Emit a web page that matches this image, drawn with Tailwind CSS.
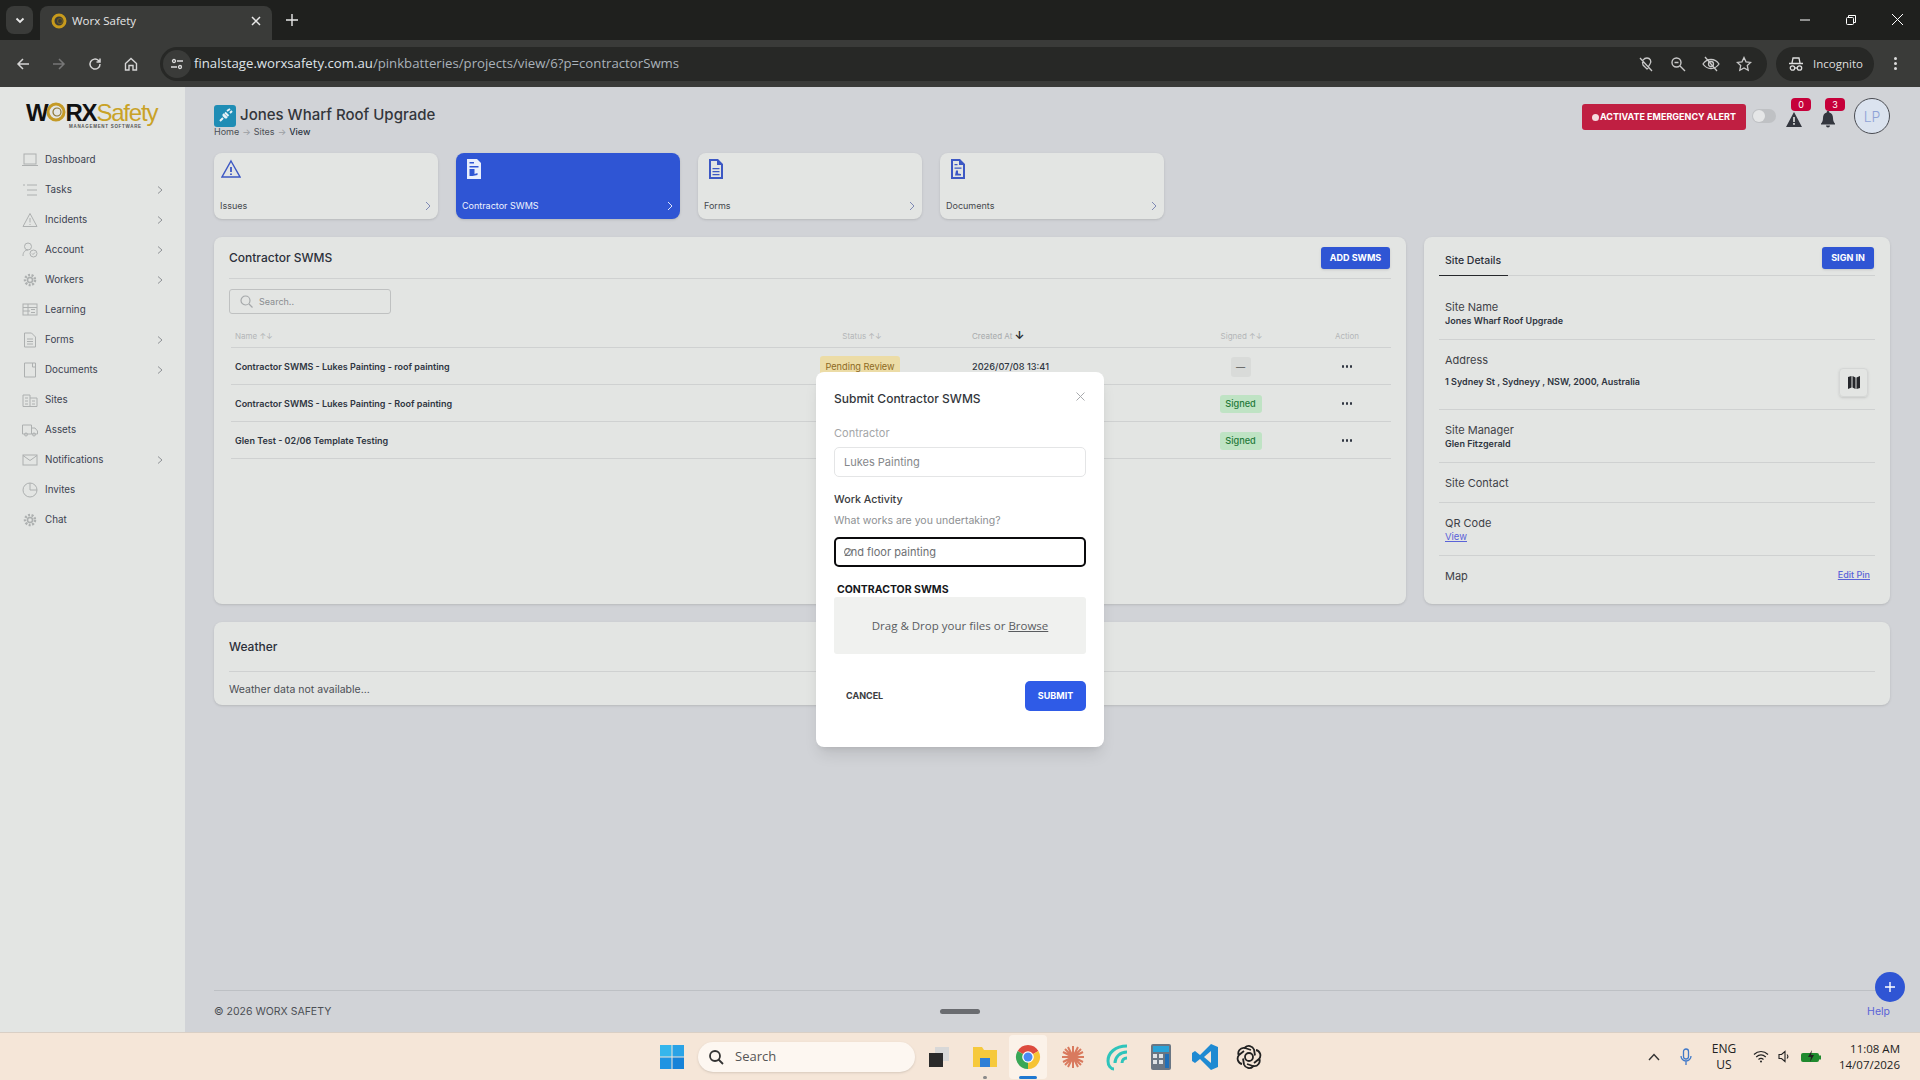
<!DOCTYPE html>
<html lang="en">
<head>
    <meta charset="UTF-8">
    <title>Worx Safety</title>
    <script src="https://cdn.jsdelivr.net/npm/@tailwindcss/browser@4"></script>
</head>
<body class="w-[1920px] h-[1080px] overflow-hidden bg-[#d1d3d7] font-['Inter','Liberation_Sans',sans-serif]">
<div class="relative flex flex-col h-[1080px]">

    <!-- Browser tabs -->
    <div class="flex items-end h-[40px] bg-[#1f201e] text-white shrink-0">
        <div class="ml-[6px] mb-[6px] w-[27px] h-[28px] rounded-lg bg-[#3a3b39] flex items-center justify-center">
            <svg width="12" height="12" viewBox="0 0 12 12" fill="none" stroke="#e8e8e8" stroke-width="1.8"><path d="M2.5 4.5 6 8l3.5-3.5"/></svg>
        </div>
        <div class="ml-[7px] w-[232px] h-[34px] rounded-t-lg bg-[#3a3b39] flex items-center pl-[11px] pr-[10px] pb-[5px]">
            <svg width="16" height="18" viewBox="0 0 16 18" fill="none"><circle cx="8" cy="9" r="6" stroke="#c79a1c" stroke-width="3"/><circle cx="9" cy="9" r="2.5" stroke="#6b5a22" stroke-width="1.2"/></svg>
            <span class="ml-[5px] text-[11.5px] text-[#e6e6e6] font-['Open_Sans',sans-serif] flex-1">Worx Safety</span>
            <svg width="12" height="12" viewBox="0 0 12 12" stroke="#e8e8e8" stroke-width="1.5"><path d="M2 2l8 8M10 2l-8 8"/></svg>
        </div>
        <svg class="ml-[14px] mb-[14px]" width="12" height="12" viewBox="0 0 12 12" stroke="#e8e8e8" stroke-width="1.4"><path d="M6 0v12M0 6h12"/></svg>
        <div class="ml-auto flex items-center mb-[15px] pr-[17px] gap-[36px]">
            <svg width="10" height="10" viewBox="0 0 10 10" stroke="#fff" stroke-width="1"><path d="M0 5h10"/></svg>
            <svg width="10" height="10" viewBox="0 0 10 10" fill="none" stroke="#fff" stroke-width="1"><rect x="0.5" y="2.5" width="7" height="7" rx="1"/><path d="M2.5 2.5V.5h7v7h-2"/></svg>
            <svg width="11" height="11" viewBox="0 0 11 11" stroke="#fff" stroke-width="1"><path d="M0 0l11 11M11 0L0 11"/></svg>
        </div>
    </div>

    <!-- Browser toolbar -->
    <div class="flex items-center h-[47px] bg-[#3a3b39] shrink-0">
        <div class="flex items-center w-[160px] pl-[16px] gap-[22px]">
            <svg width="14" height="14" viewBox="0 0 14 14" fill="none" stroke="#d5d5d5" stroke-width="1.5"><path d="M13 7H2M7 2 2 7l5 5"/></svg>
            <svg width="14" height="14" viewBox="0 0 14 14" fill="none" stroke="#777" stroke-width="1.5"><path d="M1 7h11M7 2l5 5-5 5"/></svg>
            <svg width="14" height="14" viewBox="0 0 14 14" fill="none" stroke="#d5d5d5" stroke-width="1.5"><path d="M12 7a5 5 0 1 1-1.5-3.5L12 5M12 1.5V5H8.5"/></svg>
            <svg width="14" height="14" viewBox="0 0 14 14" fill="none" stroke="#d5d5d5" stroke-width="1.4"><path d="M1.5 6.5 7 1.5l5.500 5V13H9V8.500H5V13H1.500z"/></svg>
        </div>
        <div class="flex items-center w-[1607px] h-[34px] rounded-full bg-[#272826]">
            <div class="w-[28px] h-[28px] ml-[3px] rounded-full bg-[#3a3b39] flex items-center justify-center">
                <svg width="14" height="14" viewBox="0 0 14 14" fill="none" stroke="#ddd" stroke-width="1.300"><circle cx="4" cy="4" r="1.500"/><path d="M7 4h6M1 10h6"/><circle cx="10" cy="10" r="1.500"/></svg>
            </div>
            <span class="ml-[3px] text-[13.2px] font-['Open_Sans',sans-serif] text-[#dfe3e8]">finalstage.worxsafety.com.au<span class="text-[#aab2ba]">/pinkbatteries/projects/view/6?p=contractorSwms</span></span>
            <div class="ml-auto flex items-center gap-[16px] pr-[15px]">
                <svg width="16" height="16" viewBox="0 0 16 16" fill="none" stroke="#c8c8c8" stroke-width="1.300"><path d="M5 9C3 5 6 2 9 2s5 3 3 6l-3 5-4-4zM2 2l12 13"/></svg>
                <svg width="16" height="16" viewBox="0 0 16 16" fill="none" stroke="#c8c8c8" stroke-width="1.400"><circle cx="6.500" cy="6.500" r="4.500"/><path d="M10 10l5 5M4.500 6.500h4"/></svg>
                <svg width="18" height="16" viewBox="0 0 18 16" fill="none" stroke="#c8c8c8" stroke-width="1.300"><path d="M1 8c4-6 12-6 16 0-4 6-12 6-16 0zM3 1l12 14"/><circle cx="9" cy="8" r="2.500"/></svg>
                <svg width="16" height="16" viewBox="0 0 16 16" fill="none" stroke="#c8c8c8" stroke-width="1.300"><path d="M8 1.500l2 4.300 4.700.6-3.400 3.200.9 4.700L8 12l-4.200 2.300.9-4.700L1.300 6.400 6 5.800z"/></svg>
            </div>
        </div>
        <div class="ml-[9px] flex items-center w-[98px] h-[34px] rounded-full bg-[#272826] pl-[12px] gap-[9px]">
            <svg width="16" height="16" viewBox="0 0 16 16" fill="none" stroke="#ddd" stroke-width="1.300"><path d="M1 7.500h14M4 7l1-5h6l1 5"/><circle cx="4.500" cy="12" r="2.200"/><circle cx="11.500" cy="12" r="2.200"/><path d="M6.700 12h2.600"/></svg>
            <span class="text-[11.5px] text-[#dedede] font-['Open_Sans',sans-serif]">Incognito</span>
        </div>
        <div class="ml-[20px] flex flex-col gap-[2px]">
            <span class="w-[3px] h-[3px] rounded-full bg-[#ddd]"></span><span class="w-[3px] h-[3px] rounded-full bg-[#ddd]"></span><span class="w-[3px] h-[3px] rounded-full bg-[#ddd]"></span>
        </div>
    </div>

    <!-- App -->
    <div class="flex flex-1 min-h-0">
        <!-- Sidebar -->
        <aside class="w-[185px] shrink-0 bg-[#e3e5e3]">
            <div class="h-[58px] pl-[26px] pt-[13px]">
                <div class="flex items-baseline leading-[26px] h-[24px] text-[24px] tracking-[-1.2px]">
                    <span class="font-['Liberation_Sans',sans-serif] font-bold text-[#111]">W</span>
                    <svg class="self-center mx-[-1px]" width="20" height="22" viewBox="0 0 20 22" fill="none"><circle cx="10" cy="11" r="8" stroke="#c49a26" stroke-width="3"/><circle cx="11" cy="11" r="4" stroke="#8a7432" stroke-width="1.200"/></svg>
                    <span class="font-['Liberation_Sans',sans-serif] font-bold text-[#111]">RX</span>
                    <span class="font-['Liberation_Sans',sans-serif] text-[#c9a227]">Safety</span>
                </div>
                <div class="ml-[43px] text-[4.500px] leading-[5px] tracking-[0.7px] font-bold text-[#555] font-['Liberation_Sans',sans-serif]">MANAGEMENT SOFTWARE</div>
            </div>
            <nav class="text-[9.8px] text-[#3c4250]">
                <a class="flex items-center h-[30px] pl-[22px] pr-[22px]"><svg class="w-[16px] h-[16px] mr-[7px]" viewBox="0 0 16 16" fill="none" stroke="#adb0b0" stroke-width="1"><rect x="2" y="2" width="12" height="10"/><path d="M0 13.500h16"/></svg>Dashboard</a>
                <a class="flex items-center h-[30px] pl-[22px] pr-[22px]"><svg class="w-[16px] h-[16px] mr-[7px]" viewBox="0 0 16 16" fill="none" stroke="#adb0b0" stroke-width="1"><path d="M1 3h2M5 3h10M5 8h10M5 13h10"/></svg>Tasks<svg class="ml-auto" width="6" height="8" viewBox="0 0 6 8" fill="none" stroke="#8f9296"><path d="M1 .5 5 4 1 7.500"/></svg></a>
                <a class="flex items-center h-[30px] pl-[22px] pr-[22px]"><svg class="w-[16px] h-[16px] mr-[7px]" viewBox="0 0 16 16" fill="none" stroke="#adb0b0" stroke-width="1"><path d="M8 1.500 15 14.500H1zM8 6v4.500M8 12v1"/></svg>Incidents<svg class="ml-auto" width="6" height="8" viewBox="0 0 6 8" fill="none" stroke="#8f9296"><path d="M1 .5 5 4 1 7.500"/></svg></a>
                <a class="flex items-center h-[30px] pl-[22px] pr-[22px]"><svg class="w-[16px] h-[16px] mr-[7px]" viewBox="0 0 16 16" fill="none" stroke="#adb0b0" stroke-width="1"><circle cx="6" cy="4.500" r="3.500"/><path d="M1 14c0-4 2-6 5-6"/><circle cx="11.500" cy="11.500" r="3.500"/><path d="M10 11.500l1 1 2-2"/></svg>Account<svg class="ml-auto" width="6" height="8" viewBox="0 0 6 8" fill="none" stroke="#8f9296"><path d="M1 .5 5 4 1 7.500"/></svg></a>
                <a class="flex items-center h-[30px] pl-[22px] pr-[22px]"><svg class="w-[16px] h-[16px] mr-[7px]" viewBox="0 0 16 16" fill="none" stroke="#adb0b0" stroke-width="1.500"><circle cx="8" cy="8" r="2.500"/><circle cx="8" cy="8" r="5" stroke-dasharray="2 1.500" stroke-width="2.500"/></svg>Workers<svg class="ml-auto" width="6" height="8" viewBox="0 0 6 8" fill="none" stroke="#8f9296"><path d="M1 .5 5 4 1 7.500"/></svg></a>
                <a class="flex items-center h-[30px] pl-[22px] pr-[22px]"><svg class="w-[16px] h-[16px] mr-[7px]" viewBox="0 0 16 16" fill="none" stroke="#adb0b0" stroke-width="1"><rect x="1" y="2" width="14" height="11"/><path d="M1 5.500h14M1 9h7M6 2v11M9 7.500h4M9 10.500h4"/></svg>Learning</a>
                <a class="flex items-center h-[30px] pl-[22px] pr-[22px]"><svg class="w-[16px] h-[16px] mr-[7px]" viewBox="0 0 16 16" fill="none" stroke="#adb0b0" stroke-width="1"><path d="M2.500 1h7l4 4v10h-11zM5 7h6M5 9.500h6M5 12h6"/></svg>Forms<svg class="ml-auto" width="6" height="8" viewBox="0 0 6 8" fill="none" stroke="#8f9296"><path d="M1 .5 5 4 1 7.500"/></svg></a>
                <a class="flex items-center h-[30px] pl-[22px] pr-[22px]"><svg class="w-[16px] h-[16px] mr-[7px]" viewBox="0 0 16 16" fill="none" stroke="#adb0b0" stroke-width="1"><path d="M2.500 1h11v14h-11zM10.500 1v4h3"/></svg>Documents<svg class="ml-auto" width="6" height="8" viewBox="0 0 6 8" fill="none" stroke="#8f9296"><path d="M1 .5 5 4 1 7.500"/></svg></a>
                <a class="flex items-center h-[30px] pl-[22px] pr-[22px]"><svg class="w-[16px] h-[16px] mr-[7px]" viewBox="0 0 16 16" fill="none" stroke="#adb0b0" stroke-width="1"><path d="M1 14.500V3h7v11.500M8 6h7v8.500H1M3 6h3M3 9h3M3 12h3M10 9h3M10 12h3"/></svg>Sites</a>
                <a class="flex items-center h-[30px] pl-[22px] pr-[22px]"><svg class="w-[16px] h-[16px] mr-[7px]" viewBox="0 0 16 16" fill="none" stroke="#adb0b0" stroke-width="1"><path d="M0.500 3h9v9h-9zM9.500 6h3.500l2.500 3v3h-6"/><circle cx="4" cy="12.500" r="1.500"/><circle cx="12" cy="12.500" r="1.500"/></svg>Assets</a>
                <a class="flex items-center h-[30px] pl-[22px] pr-[22px]"><svg class="w-[16px] h-[16px] mr-[7px]" viewBox="0 0 16 16" fill="none" stroke="#adb0b0" stroke-width="1"><rect x="1" y="3" width="14" height="10"/><path d="M1 3.500l7 5 7-5"/></svg>Notifications<svg class="ml-auto" width="6" height="8" viewBox="0 0 6 8" fill="none" stroke="#8f9296"><path d="M1 .5 5 4 1 7.500"/></svg></a>
                <a class="flex items-center h-[30px] pl-[22px] pr-[22px]"><svg class="w-[16px] h-[16px] mr-[7px]" viewBox="0 0 16 16" fill="none" stroke="#adb0b0" stroke-width="1"><circle cx="8" cy="8" r="7"/><path d="M8 1v7h7"/></svg>Invites</a>
                <a class="flex items-center h-[30px] pl-[22px] pr-[22px]"><svg class="w-[16px] h-[16px] mr-[7px]" viewBox="0 0 16 16" fill="none" stroke="#adb0b0" stroke-width="1.500"><circle cx="8" cy="8" r="2.500"/><circle cx="8" cy="8" r="5" stroke-dasharray="2 1.500" stroke-width="2.500"/></svg>Chat</a>
            </nav>
        </aside>

        <!-- Main -->
        <main class="flex-1 min-w-0 flex flex-col pl-[29px] pr-[30px]">
            <!-- Page header -->
            <div class="flex h-[66px] pt-[11px] shrink-0">
                <div>
                    <div class="flex items-center h-[23px] mt-[6px]">
                        <div class="w-[22px] h-[22px] rounded-[3px] bg-[#1f8db5] flex items-center justify-center">
                            <svg width="15" height="15" viewBox="0 0 15 15" fill="none" stroke="#e9f3f7" stroke-width="2"><path d="M2 13l3-3M5 7l3 3M7 4.500l3.500 3.500M9 3l3-2M12 5l2-2M5 6l4 4"/></svg>
                        </div>
                        <h1 class="ml-[4px] text-[15px] font-medium text-[#33363b]">Jones Wharf Roof Upgrade</h1>
                    </div>
                    <div class="flex items-center text-[9px] h-[12px] -mt-[1px] text-[#4c4f55]">
                        <span>Home</span><span class="mx-[3px] text-[#9a9da2]">→</span><span>Sites</span><span class="mx-[3px] text-[#9a9da2]">→</span><span class="font-medium text-[#2b3442]">View</span>
                    </div>
                </div>
                <div class="ml-auto flex items-start">
                    <button class="mt-[6px] w-[164px] h-[26px] rounded-[3px] bg-[#c01f42] text-white text-[9px] font-bold flex items-center justify-center">
                        <span class="w-[7px] h-[7px] rounded-full bg-[#f6dbe0] mr-[1px]"></span>ACTIVATE EMERGENCY ALERT
                    </button>
                    <div class="ml-[6px] mt-[11px] w-[24px] h-[14px] rounded-full bg-[#bfc1c4] relative"><span class="absolute left-[1px] top-[1px] w-[12px] h-[12px] rounded-full bg-[#e5e6e7]"></span></div>
                    <div class="relative ml-[10px] w-[20px] h-[36px]">
                        <span class="absolute left-[5px] top-0 w-[20px] h-[13px] rounded-[4px] bg-[#c6003a] text-white text-[9px] leading-[13px] text-center">0</span>
                        <svg class="absolute left-0 top-[14px]" width="16" height="15" viewBox="0 0 16 15"><path d="M8 0 16 15H0z" fill="#33363e"/><rect x="7.200" y="5" width="1.600" height="5" fill="#e3e5e3"/><rect x="7.200" y="11" width="1.600" height="1.800" fill="#e3e5e3"/></svg>
                    </div>
                    <div class="relative ml-[13px] w-[20px] h-[36px]">
                        <span class="absolute left-[6px] top-0 w-[20px] h-[13px] rounded-[4px] bg-[#c6003a] text-white text-[9px] leading-[13px] text-center">3</span>
                        <svg class="absolute left-[2px] top-[13px]" width="14" height="17" viewBox="0 0 14 17"><path d="M7 0a1.200 1.200 0 0 1 1.200 1.500C11 2.200 12 4.500 12 7c0 3 1 4.500 2 5.500v1H0v-1c1-1 2-2.500 2-5.500 0-2.500 1-4.800 3.800-5.500A1.200 1.200 0 0 1 7 0zM5 14.500h4a2 2 0 0 1-4 0z" fill="#33363e"/></svg>
                    </div>
                    <div class="ml-[15px] w-[36px] h-[36px] rounded-full bg-[#dbe3ef] border border-[#4a4c52] flex items-center justify-center text-[14px] font-light text-[#8ea2d6]">LP</div>
                </div>
            </div>

            <!-- Tab cards -->
            <div class="flex gap-[18px] shrink-0">
                <div class="w-[224px] h-[66px] rounded-lg bg-[#e3e5e3] shadow-sm relative pl-[7px] pt-[6px]">
                    <svg width="20" height="20" viewBox="0 0 20 20" fill="none" stroke="#3d58c4" stroke-width="1.400"><path d="M10 2 19 18H1z"/><path d="M10 8v5M10 14.500v1.500" stroke-width="1.800"/></svg>
                    <div class="absolute left-[6px] bottom-[8px] leading-[11px] text-[9px] text-[#45484d]">Issues</div>
                    <svg class="absolute right-[7px] bottom-[8px]" width="6" height="10" viewBox="0 0 6 10" fill="none" stroke="#7f89b5"><path d="M1 1l4 4-4 4"/></svg>
                </div>
                <div class="w-[224px] h-[66px] rounded-lg bg-[#2f55d4] shadow-sm relative px-[10px] pt-[6px]">
                    <svg width="16" height="20" viewBox="0 0 16 20" fill="#e9eefc"><path d="M1 0h10l4 4v16H1zM3.500 3v1.500H8V3zM3.500 7v1.500h9V7zM3.500 10v7h3l5-1v-2l-3 1v-5z"/></svg>
                    <div class="absolute left-[6px] bottom-[8px] leading-[11px] text-[9px] text-[#f0f3fd]">Contractor SWMS</div>
                    <svg class="absolute right-[7px] bottom-[8px]" width="6" height="10" viewBox="0 0 6 10" fill="none" stroke="#dfe6fb"><path d="M1 1l4 4-4 4"/></svg>
                </div>
                <div class="w-[224px] h-[66px] rounded-lg bg-[#e3e5e3] shadow-sm relative px-[10px] pt-[6px]">
                    <svg width="16" height="20" viewBox="0 0 16 20" fill="#3d58c4"><path d="M1 0h9l5 5v15H1zM3 2v16h10V6H9V2zM4.500 9h7v1.300h-7zM4.500 12h7v1.300h-7zM4.500 15h7v1.300h-7z" fill-rule="evenodd"/></svg>
                    <div class="absolute left-[6px] bottom-[8px] leading-[11px] text-[9px] text-[#45484d]">Forms</div>
                    <svg class="absolute right-[7px] bottom-[8px]" width="6" height="10" viewBox="0 0 6 10" fill="none" stroke="#7f89b5"><path d="M1 1l4 4-4 4"/></svg>
                </div>
                <div class="w-[224px] h-[66px] rounded-lg bg-[#e3e5e3] shadow-sm relative px-[10px] pt-[6px]">
                    <svg width="16" height="20" viewBox="0 0 16 20" fill="#3d58c4"><path d="M1 0h9l5 5v15H1zM3 2v16h10V6H9V2zM4.500 5h3v1.300h-3zM4.500 8.500h7v1.300h-7zM6 11.500h2v3l3 .5v1.500H5z" fill-rule="evenodd"/></svg>
                    <div class="absolute left-[6px] bottom-[8px] leading-[11px] text-[9px] text-[#45484d]">Documents</div>
                    <svg class="absolute right-[7px] bottom-[8px]" width="6" height="10" viewBox="0 0 6 10" fill="none" stroke="#7f89b5"><path d="M1 1l4 4-4 4"/></svg>
                </div>
            </div>

            <!-- Panels -->
            <div class="flex gap-[18px] mt-[18px] h-[367px] shrink-0">
                <!-- Contractor SWMS -->
                <section class="w-[1192px] rounded-lg bg-[#e3e5e3] shadow-sm px-[15px]">
                    <div class="flex items-center justify-between h-[42px] border-b border-[#cfd1d1]">
                        <h2 class="text-[12px] font-medium text-[#2b2f3a]">Contractor SWMS</h2>
                        <button class="w-[69px] h-[22px] mr-[1px] rounded-[3px] bg-[#2f55d4] text-white text-[9px] font-bold shadow-sm">ADD SWMS</button>
                    </div>
                    <div class="mt-[10px] w-[162px] h-[25px] border border-[#bfc1c1] rounded-[3px] flex items-center pl-[10px] text-[9px] text-[#8a8d90]">
                        <svg class="mr-[6px]" width="13" height="13" viewBox="0 0 13 13" fill="none" stroke="#a5a8aa" stroke-width="1.200"><circle cx="5.500" cy="5.500" r="4.500"/><path d="M9 9l3.500 3.500"/></svg>Search..
                    </div>
                    <div class="flex items-center h-[34px] pt-[10px] border-b border-[#cfd1d1] text-[8px] text-[#b3b6b8] ml-[2px]">
                        <div class="pl-[4px] w-[566px]">Name ↑↓</div>
                        <div class="w-[130px] text-center">Status ↑↓</div>
                        <div class="ml-[45px] w-[242px] text-[#a7aaac]">Created At <span class="text-[#26282c] font-bold text-[11px]">↓</span></div>
                        <div class="w-[55px] text-center">Signed ↑↓</div>
                        <div class="ml-[38px] w-[80px] text-center">Action</div>
                    </div>
                    <div class="flex items-center h-[37px] pt-[1px] border-b border-[#cfd1d1] text-[9.2px] ml-[2px]">
                        <div class="pl-[4px] w-[589px] text-[9px] font-semibold text-[#2f3541]">Contractor SWMS - Lukes Painting - roof painting</div>
                        <div class="w-[152px]"><span class="inline-block w-[80px] text-center py-[4px] rounded-[3px] bg-[#ecdca6] text-[#8c6a1f]">Pending Review</span></div>
                        <div class="w-[221px] text-[#2f3541] font-medium">2026/07/08 13:41</div>
                        <div class="w-[95px] flex justify-center"><span class="w-[20px] h-[20px] rounded-[3px] bg-[#d9dbd9] text-center leading-[20px] text-[#555]">—</span></div>
                        <div class="ml-[19px] w-[80px] flex justify-center gap-[1.5px]"><span class="w-[2.5px] h-[2.5px] rounded-full bg-[#2f3541]"></span><span class="w-[2.5px] h-[2.5px] rounded-full bg-[#2f3541]"></span><span class="w-[2.5px] h-[2.5px] rounded-full bg-[#2f3541]"></span></div>
                    </div>
                    <div class="flex items-center h-[37px] pt-[1px] border-b border-[#cfd1d1] text-[9.2px] ml-[2px]">
                        <div class="pl-[4px] w-[962px] text-[9px] font-semibold text-[#2f3541]">Contractor SWMS - Lukes Painting - Roof painting</div>
                        <div class="w-[95px] flex justify-center"><span class="w-[42px] h-[18px] rounded-[3px] bg-[#bfe3c4] text-center leading-[18px] text-[#1f7a3a] font-medium">Signed</span></div>
                        <div class="ml-[19px] w-[80px] flex justify-center gap-[1.5px]"><span class="w-[2.5px] h-[2.5px] rounded-full bg-[#2f3541]"></span><span class="w-[2.5px] h-[2.5px] rounded-full bg-[#2f3541]"></span><span class="w-[2.5px] h-[2.5px] rounded-full bg-[#2f3541]"></span></div>
                    </div>
                    <div class="flex items-center h-[37px] pt-[1px] border-b border-[#cfd1d1] text-[9.2px] ml-[2px]">
                        <div class="pl-[4px] w-[962px] text-[9px] font-semibold text-[#2f3541]">Glen Test - 02/06 Template Testing</div>
                        <div class="w-[95px] flex justify-center"><span class="w-[42px] h-[18px] rounded-[3px] bg-[#bfe3c4] text-center leading-[18px] text-[#1f7a3a] font-medium">Signed</span></div>
                        <div class="ml-[19px] w-[80px] flex justify-center gap-[1.5px]"><span class="w-[2.5px] h-[2.5px] rounded-full bg-[#2f3541]"></span><span class="w-[2.5px] h-[2.5px] rounded-full bg-[#2f3541]"></span><span class="w-[2.5px] h-[2.5px] rounded-full bg-[#2f3541]"></span></div>
                    </div>
                </section>

                <!-- Site details -->
                <section class="w-[466px] rounded-lg bg-[#e3e5e3] shadow-sm px-[15px] text-[#3e4147]">
                    <div class="flex justify-between h-[39px] border-b border-[#cfd1d1]">
                        <div class="w-[69px] h-[39px] border-b border-[#26282c] pl-[6px] pt-[17px] text-[10.5px] leading-[14px] font-medium text-[#2b2f3a]">Site Details</div>
                        <button class="mt-[10px] mr-[1px] w-[52px] h-[22px] rounded-[3px] bg-[#2f55d4] text-white text-[9px] font-bold shadow-sm">SIGN IN</button>
                    </div>
                    <div class="h-[64px] border-b border-[#cfd1d1] pl-[6px] pt-[24px]">
                        <div class="text-[11px] leading-[14px]">Site Name</div>
                        <div class="text-[9px] leading-[14px] font-semibold text-[#2f3541]">Jones Wharf Roof Upgrade</div>
                    </div>
                    <div class="relative h-[70px] border-b border-[#cfd1d1] pl-[6px] pt-[13px]">
                        <div class="text-[11px] leading-[14px]">Address</div>
                        <div class="mt-[8px] text-[9px] leading-[14px] font-semibold text-[#2f3541]">1 Sydney St , Sydneyy , NSW, 2000, Australia</div>
                        <div class="absolute right-[7px] top-[28px] w-[29px] h-[29px] rounded-[4px] border border-[#d5d7d6] shadow-sm flex items-center justify-center">
                            <svg width="12" height="13" viewBox="0 0 12 13" fill="#25272b"><path d="M0 1l3.500-1v11.500L0 13zM4.500 0 7.500 1.500V13l-3-1.500zM8.500 1.500 12 0v12l-3.500 1z"/></svg>
                        </div>
                    </div>
                    <div class="h-[53px] border-b border-[#cfd1d1] pl-[6px] pt-[13px]">
                        <div class="text-[11px] leading-[14px]">Site Manager</div>
                        <div class="text-[9px] leading-[14px] font-semibold text-[#2f3541]">Glen Fitzgerald</div>
                    </div>
                    <div class="h-[40px] border-b border-[#cfd1d1] pl-[6px] pt-[13px]">
                        <div class="text-[11px] leading-[14px]">Site Contact</div>
                    </div>
                    <div class="h-[53px] border-b border-[#cfd1d1] pl-[6px] pt-[13px]">
                        <div class="text-[11px] leading-[14px]">QR Code</div>
                        <div class="text-[9.500px] leading-[14px] text-[#5a63d8] underline">View</div>
                    </div>
                    <div class="flex justify-between pl-[6px] pr-[5px] pt-[13px]">
                        <div class="text-[11px] leading-[14px]">Map</div>
                        <div class="text-[9px] leading-[12px] text-[#5a63d8] underline font-medium">Edit Pin</div>
                    </div>
                </section>
            </div>

            <!-- Weather -->
            <section class="mt-[18px] h-[83px] rounded-lg bg-[#e3e5e3] shadow-sm px-[15px] shrink-0">
                <h2 class="h-[50px] border-b border-[#cfd1d1] flex items-center text-[12px] font-medium text-[#2b2f3a]">Weather</h2>
                <p class="mt-[10px] text-[10.500px] text-[#4c4f55]">Weather data not available...</p>
            </section>

            <!-- Footer -->
            <footer class="mt-auto h-[42px] border-t border-[#bdc0c4] flex items-center justify-between text-[10.500px] text-[#4c4f55] shrink-0">
                <span class="mt-[1px]">© 2026 WORX SAFETY</span>
                <span class="mt-[1px] text-[#5a63d8]">Help</span>
            </footer>
        </main>
    </div>

    <!-- Taskbar -->
    <div class="relative flex items-center h-[48px] bg-[#f5e6d8] border-t border-[#d9cfc5] shrink-0 pl-[660px]">
        <svg width="24" height="24" viewBox="0 0 24 24"><rect width="11.500" height="11.500" fill="#35b6ec"/><rect x="12.500" width="11.500" height="11.500" fill="#2aa3e6"/><rect y="12.500" width="11.500" height="11.500" fill="#1f94e2"/><rect x="12.500" y="12.500" width="11.500" height="11.500" fill="#1682d8"/></svg>
        <div class="ml-[14px] w-[217px] h-[30px] rounded-full bg-[#fdf7f1] shadow-sm flex items-center pl-[10px] text-[13px] text-[#555] font-['Open_Sans',sans-serif]">
            <svg class="mr-[11px]" width="16" height="16" viewBox="0 0 16 16" fill="none" stroke="#333" stroke-width="1.800"><circle cx="7" cy="7" r="5"/><path d="M10.500 10.500 15 15"/></svg>Search
        </div>
        <div class="ml-[1px] w-[44px] flex justify-center">
            <svg width="22" height="20" viewBox="0 0 22 20"><rect x="8" y="0" width="14" height="14" fill="#d8d8d8"/><rect x="2" y="6" width="14" height="14" fill="#2b2b2b"/></svg>
        </div>
        <div class="ml-[3px] w-[44px] h-[44px] flex justify-center items-center relative">
            <svg width="26" height="24" viewBox="0 0 26 24"><path d="M1 2h9l2 3h13v17H1z" fill="#f6c93c"/><rect x="8" y="13" width="10" height="9" fill="#2f7fd6"/></svg>
            <span class="absolute bottom-0 left-[20px] w-[4px] h-[3px] rounded bg-[#8a8a8a]"></span>
        </div>
        <div class="ml-[2px] w-[38px] h-[44px] rounded-[4px] bg-[#fbf2e9] flex items-center justify-center relative">
            <svg width="26" height="26" viewBox="0 0 26 26"><path d="M13 13 2.600 7A12 12 0 0 1 23.400 7z" fill="#dd4b3e"/><path d="M13 13 2.600 7A12 12 0 0 0 13 25z" fill="#3aa757"/><path d="M13 13 13 25A12 12 0 0 0 23.400 7z" fill="#f6c333"/><circle cx="13" cy="13" r="5.800" fill="#fff"/><circle cx="13" cy="13" r="4.500" fill="#4a8af4"/></svg>
            <span class="absolute bottom-0 left-[10px] w-[18px] h-[3px] rounded bg-[#1f78d1]"></span>
        </div>
        <div class="ml-[4px] w-[44px] flex justify-center">
            <svg width="24" height="24" viewBox="0 0 24 24" stroke="#d97a5e" stroke-width="2"><path d="M12 1v22M1 12h22M4 4l16 16M20 4 4 20M7 2l10 20M17 2 7 22M2 7l20 10M22 7 2 17"/></svg>
        </div>
        <div class="w-[44px] flex justify-center">
            <svg width="24" height="28" viewBox="0 0 24 28" fill="none" stroke="#2fc4bb" stroke-width="3"><path d="M22 3C10 3 3 10 3 18c0 5 3 8 6 8M22 9c-7 0-12 5-12 11M22 15c-3 0-5 2-5 5"/></svg>
        </div>
        <div class="w-[44px] flex justify-center">
            <svg width="20" height="26" viewBox="0 0 20 26"><rect width="20" height="26" rx="2" fill="#6a7683"/><rect x="2" y="2" width="16" height="6" fill="#2aa3d8"/><rect x="2" y="10" width="4" height="4" fill="#dfe3e6"/><rect x="8" y="10" width="4" height="4" fill="#dfe3e6"/><rect x="14" y="10" width="4" height="14" fill="#1f6fb8"/><rect x="2" y="16" width="4" height="4" fill="#dfe3e6"/><rect x="8" y="16" width="4" height="4" fill="#dfe3e6"/></svg>
        </div>
        <div class="w-[44px] flex justify-center">
            <svg width="26" height="26" viewBox="0 0 26 26"><path d="M19 0 26 3v20l-7 3L8 15l-5 4-3-2v-8l3-2 5 4z" fill="#1f8ad2"/><path d="M19 7 12 13l7 6z" fill="#f5e6d8"/></svg>
        </div>
        <div class="w-[44px] flex justify-center">
            <svg width="26" height="26" viewBox="0 0 26 26" fill="none" stroke="#222" stroke-width="1.800"><circle cx="13" cy="13" r="4"/><path d="M9 3.500a5.500 5.500 0 0 1 9 2l1 6M20 6a5.500 5.500 0 0 1 3 9l-5 4M23 14a5.500 5.500 0 0 1-6 8l-6-2M17 22.500a5.500 5.500 0 0 1-9-2l-1-6M6 20a5.500 5.500 0 0 1-3-9l5-4M3 12a5.500 5.500 0 0 1 6-8l6 2"/></svg>
        </div>

        <div class="absolute right-[20px] top-0 h-full flex items-center text-[#222] font-['Open_Sans',sans-serif] text-[12px]">
            <svg width="12" height="8" viewBox="0 0 12 8" fill="none" stroke="#333" stroke-width="1.400"><path d="M1 7l5-5.500L11 7"/></svg>
            <svg class="ml-[20px]" width="12" height="18" viewBox="0 0 12 18" fill="none" stroke="#3f78c8" stroke-width="1.300"><rect x="3.500" y="1" width="5" height="10" rx="2.500"/><path d="M1 8a5 5 0 0 0 10 0M6 13v4"/></svg>
            <div class="ml-[14px] w-[36px] text-center leading-[16px]">ENG<br>US</div>
            <svg class="ml-[11px]" width="16" height="13" viewBox="0 0 16 13" fill="none" stroke="#222" stroke-width="1.200"><path d="M1 4.500c4-4 10-4 14 0M3.200 7c3-2.700 6.600-2.700 9.600 0M5.500 9.500c1.500-1.300 3.500-1.300 5 0"/><circle cx="8" cy="11.500" r="1" fill="#222" stroke="none"/></svg>
            <svg class="ml-[9px]" width="11" height="13" viewBox="0 0 11 13" fill="none" stroke="#222" stroke-width="1.100"><path d="M1 4.500h2.500L7 1.500v10l-3.500-3H1zM9 4.500a3 3 0 0 1 0 4"/></svg>
            <svg class="ml-[12px]" width="20" height="13" viewBox="0 0 20 13"><rect x="0" y="3" width="18" height="9" rx="2" fill="#1f8a2e"/><rect x="18" y="5.500" width="2" height="4" fill="#1f8a2e"/><path d="M11 0 7 7h3l-1 5 4-7h-3z" fill="#222"/></svg>
            <div class="ml-[13px] w-[66px] text-right leading-[16px] text-[11.5px]">11:08 AM<br>14/07/2026</div>
        </div>
    </div>

    <!-- Scroll pill and help button -->
    <div class="absolute left-[940px] top-[1009px] w-[40px] h-[5px] rounded-full bg-[#6a6c70]"></div>
    <button class="absolute left-[1875px] top-[972px] w-[30px] h-[30px] rounded-full bg-[#2f55d4] flex items-center justify-center">
        <svg width="12" height="12" viewBox="0 0 12 12" stroke="#fff" stroke-width="1.400"><path d="M6 1v10M1 6h10"/></svg>
    </button>

    <!-- Submit modal -->
    <div class="absolute left-[816px] top-[372px] w-[288px] h-[375px] rounded-lg bg-white shadow-lg px-[18px]">
        <div class="flex justify-between items-center h-[53px]">
            <h3 class="text-[12px] font-medium text-[#33363b]">Submit Contractor SWMS</h3>
            <svg class="mb-[4px] mr-[1px]" width="9" height="9" viewBox="0 0 9 9" stroke="#a8aaad" stroke-width="1"><path d="M.5.500l8 8M8.500.500l-8 8"/></svg>
        </div>
        <div class="text-[11px] leading-[14px] mt-[1px] text-[#a4a6a8]">Contractor</div>
        <div class="mt-[7px] h-[30px] border border-[#e4e5e6] rounded-[5px] pl-[9px] flex items-center text-[11px] text-[#85878a]">Lukes Painting</div>
        <div class="mt-[16px] text-[10.7px] leading-[14px] font-medium text-[#3a3c40]">Work Activity</div>
        <div class="mt-[7px] text-[10.5px] leading-[14px] text-[#8d8f92]">What works are you undertaking?</div>
        <div class="relative mt-[9px] h-[30px] border-2 border-[#0b0b0d] rounded-[5px] pl-[8px] flex items-center text-[11px] text-[#6d6f72]">2nd floor painting
            <span class="absolute left-[8px] top-[9px] w-[8px] h-[8px] rounded-full border border-[#77797c]"></span>
        </div>
        <div class="mt-[16px] pl-[3px] text-[10.500px] leading-[14px] font-bold text-[#15171b]">CONTRACTOR SWMS</div>
        <div class="h-[57px] rounded-[3px] bg-[#f0f1ef] flex items-center justify-center text-[11.5px] text-[#5a5c5f] font-['Open_Sans',sans-serif]">Drag &amp; Drop your files or&nbsp;<span class="underline">Browse</span></div>
        <div class="flex justify-between items-center mt-[27px]">
            <span class="ml-[12px] text-[9px] font-bold text-[#3a3c40]">CANCEL</span>
            <button class="w-[61px] h-[30px] rounded-[5px] bg-[#2f5be7] text-white text-[9px] font-bold">SUBMIT</button>
        </div>
    </div>
</div>
</body>
</html>
